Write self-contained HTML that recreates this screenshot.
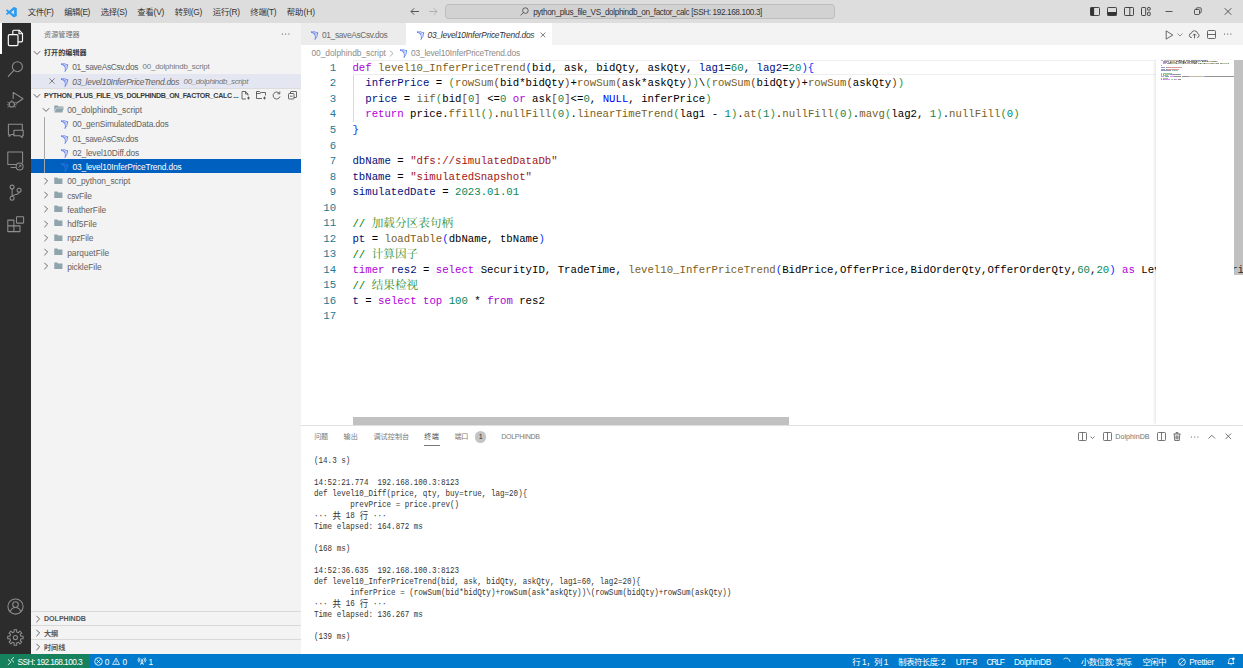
<!DOCTYPE html>
<html lang="zh-CN">
<head>
<meta charset="utf-8">
<title>03_level10InferPriceTrend.dos</title>
<style>
*{box-sizing:border-box;margin:0;padding:0}
html,body{width:1243px;height:668px;overflow:hidden;background:#fff}
body{position:relative;font-family:"Liberation Sans","Noto Sans CJK SC",sans-serif;font-size:8.4px;color:#616161}
div,span{white-space:pre}
.a{position:absolute}
#titlebar{position:absolute;left:0;top:0;width:1243px;height:22.7px;background:#dddddd}
#activity{position:absolute;left:0;top:22.7px;width:31px;height:631.3px;background:#2c2c2c}
#sidebar{position:absolute;left:31px;top:22.7px;width:270px;height:631.3px;background:#f3f3f3}
#tabs{position:absolute;left:301px;top:22.7px;width:942px;height:22.7px;background:#f3f3f3}
#editor{position:absolute;left:301px;top:45.4px;width:942px;height:381px;background:#fff}
#panel{position:absolute;left:301px;top:425.5px;width:942px;height:229px;background:#fff;border-top:1px solid #e0e0e0}
#status{position:absolute;left:0;top:653.8px;width:1243px;height:14.2px;background:#007acc;color:#fff}
.menu{position:absolute;top:0;height:22.7px;line-height:23.5px;color:#333;font-size:8.4px}
.row{position:absolute;left:0;width:301px;background-clip:content-box;padding-left:31px;height:14.24px;line-height:14.24px;font-size:8.4px;color:#616161}
.row span.a{top:0.9px}
.hd{font-weight:bold;font-size:7.1px;color:#3b3b3b}
.code{position:absolute;left:353px;height:15.54px;line-height:15.54px;font-family:"Liberation Mono","Noto Serif CJK SC",monospace;font-size:10.7px;color:#000;letter-spacing:0px}
.ln{position:absolute;left:301px;width:35.2px;text-align:right;height:15.54px;line-height:15.54px;font-family:"Liberation Mono",monospace;font-size:10.7px;color:#237893}
.k{color:#af00db}.f{color:#795e26}.v{color:#001080}.n{color:#098658}.s{color:#a31515}.c{color:#008000}.b1{color:#0431fa}.b2{color:#319331}.b3{color:#7b3814}.nu{color:#0000ff}
.term{position:absolute;left:314px;height:11px;line-height:11px;font-family:"Liberation Mono","Noto Sans CJK SC",monospace;font-size:8.7px;color:#333;transform-origin:0 50%;transform:scaleX(0.8701)}
.tc{display:inline-block;width:10.44px;text-align:center;font-size:9.6px;line-height:11px;vertical-align:top}
.st{position:absolute;top:0;height:14.2px;line-height:16.4px;font-size:8.2px;color:#fff}
.pt{position:absolute;top:0;height:22.7px;line-height:22.7px;font-size:7.1px;color:#7a7a7a}
svg{position:absolute;overflow:visible}
#mm i{position:absolute;height:1.1px;opacity:0.42}
</style>
</head>
<body>
<div id="titlebar">
<svg style="left:6.3px;top:6.5px" width="10.8" height="10.4" viewBox="0 0 100 100" preserveAspectRatio="none"><path d="M96.5 10.8L75.9.9C73.5-.3 70.7.2 68.8 2.100L29.4 38 12.2 25c-1.600-1.200-3.800-1.100-5.300.2L1.400 30.200c-1.900 1.700-1.900 4.600 0 6.300L16.300 50 1.400 63.500c-1.900 1.700-1.900 4.600 0 6.300l5.500 5c1.500 1.300 3.700 1.400 5.300.2l17.200-13 39.400 35.900c1.900 1.900 4.700 2.400 7.100 1.200l20.600-9.900c2.100-1 3.500-3.200 3.500-5.600V16.400c0-2.400-1.400-4.600-3.500-5.600zM75 27.300L45.100 50 75 72.700z" fill="#2a9bf1" fill-rule="evenodd"/></svg>
<div class="menu" style="left:27.7px;top:1.2px;font-size:8.4px;letter-spacing:-0.351px">文件(F)</div>
<div class="menu" style="left:64.2px;top:1.2px;font-size:8.4px;letter-spacing:-0.444px">编辑(E)</div>
<div class="menu" style="left:100.7px;top:1.2px;font-size:8.4px;letter-spacing:-0.324px">选择(S)</div>
<div class="menu" style="left:137.2px;top:1.2px;font-size:8.4px;letter-spacing:-0.184px">查看(V)</div>
<div class="menu" style="left:174.7px;top:1.2px;font-size:8.4px;letter-spacing:-0.309px">转到(G)</div>
<div class="menu" style="left:212.8px;top:1.2px;font-size:8.4px;letter-spacing:-0.258px">运行(R)</div>
<div class="menu" style="left:250.3px;top:1.2px;font-size:8.4px;letter-spacing:-0.271px">终端(T)</div>
<div class="menu" style="left:286.8px;top:1.2px;font-size:8.4px;letter-spacing:-0.058px">帮助(H)</div>
<svg style="left:410px;top:7px" width="10" height="9" viewBox="0 0 10 9"><path d="M9 4.5H1.2M4.2 1.3L1 4.5l3.2 3.2" fill="none" stroke="#444" stroke-width="0.9"/></svg>
<svg style="left:428px;top:7px" width="10" height="9" viewBox="0 0 10 9"><path d="M1 4.5h7.8M5.8 1.3L9 4.5 5.8 7.7" fill="none" stroke="#aaa" stroke-width="0.9"/></svg>
<div class="a" style="left:444.8px;top:4px;width:389.8px;height:15.3px;background:#d2d2d2;border:1px solid #bdbdbd;border-radius:3.5px"></div>
<svg style="left:520px;top:7px" width="9" height="9" viewBox="0 0 9 9"><circle cx="5.4" cy="3.6" r="2.8" fill="none" stroke="#444" stroke-width="0.8"/><path d="M3.4 5.6L0.6 8.4" stroke="#444" stroke-width="0.8"/></svg>
<div class="menu" style="left:533.2px;top:0.7px;font-size:8.2px;letter-spacing:-0.374px">python_plus_file_VS_dolphindb_on_factor_calc [SSH: 192.168.100.3]</div>
<svg style="left:1090.0px;top:7px" width="10" height="9" viewBox="0 0 10 9"><rect x="0.5" y="0.5" width="9" height="8" rx="0.8" fill="none" stroke="#333" stroke-width="0.9"/><rect x="0.5" y="0.5" width="3.6" height="8" fill="#333"/></svg>
<svg style="left:1107.0px;top:7px" width="10" height="9" viewBox="0 0 10 9"><rect x="0.5" y="0.5" width="9" height="8" rx="0.8" fill="none" stroke="#333" stroke-width="0.9"/><rect x="0.5" y="5" width="9" height="3.5" fill="#333"/></svg>
<svg style="left:1124.0px;top:7px" width="10" height="9" viewBox="0 0 10 9"><rect x="0.5" y="0.5" width="9" height="8" rx="0.8" fill="none" stroke="#333" stroke-width="0.9"/><path d="M5.8 0.5v8" stroke="#333" stroke-width="0.9"/></svg>
<svg style="left:1141.0px;top:7px" width="10" height="9" viewBox="0 0 10 9"><rect x="0.5" y="0.5" width="4.2" height="8" rx="0.8" fill="none" stroke="#333" stroke-width="0.9"/><rect x="6.6" y="0.5" width="2.6" height="2.6" rx="0.6" fill="none" stroke="#333" stroke-width="0.9"/><rect x="6.6" y="5.2" width="2.6" height="3.3" rx="0.6" fill="none" stroke="#333" stroke-width="0.9"/></svg>
<svg style="left:1165px;top:7px" width="8" height="9" viewBox="0 0 8 9"><path d="M0.5 4.5h7" stroke="#333" stroke-width="0.8"/></svg>
<svg style="left:1194px;top:7px" width="8" height="9" viewBox="0 0 8 9"><rect x="0.5" y="2.5" width="5" height="5" rx="0.8" fill="none" stroke="#333" stroke-width="0.8"/><path d="M2.2 2.5V1.6a0.8 0.8 0 0 1 .8-.8h3.4a0.8 0.8 0 0 1 .8.8V5a0.8 0.8 0 0 1-.8.8H5.6" fill="none" stroke="#333" stroke-width="0.8"/></svg>
<svg style="left:1224px;top:7px" width="8" height="9" viewBox="0 0 8 9"><path d="M0.7 1.2l6.6 6.6M7.3 1.2L0.7 7.8" stroke="#333" stroke-width="0.8"/></svg>
</div>
<div id="activity">
<div class="a" style="left:0;top:0;width:1.5px;height:31px;background:#fff"></div>
<svg style="left:0;top:0.30px" width="31" height="31" viewBox="0 0 31 31" fill="none" stroke="#ffffff" stroke-width="1.15" stroke-linejoin="round" stroke-linecap="round"><path d="M12.8 11.4V8.2a1 1 0 0 1 1-1h5.3l3.400 3.400v7.200a1 1 0 0 1-1 1h-3.300"/><path d="M19 7.300v3.400h3.400"/><rect x="8.300" y="11.600" width="9.700" height="11" rx="1.300"/></svg>
<svg style="left:0;top:31.37px" width="31" height="31" viewBox="0 0 31 31" fill="none" stroke="#8e8e8e" stroke-width="1.05" stroke-linejoin="round" stroke-linecap="round"><circle cx="17.400" cy="12.700" r="5"/><path d="M13.800 16.400L8.300 22.400"/></svg>
<svg style="left:0;top:62.44px" width="31" height="31" viewBox="0 0 31 31" fill="none" stroke="#8e8e8e" stroke-width="1.05" stroke-linejoin="round" stroke-linecap="round"><path d="M13.200 13.500V7.400L23 13.700l-6.600 4.500"/><circle cx="11.800" cy="19.400" r="2.600"/><path d="M11.800 16.800v-1.300M9.300 18.300l-1.600-.9M9.200 19.800H7.400M9.500 21l-1.600 1.200M14.300 18.300l1.600-.9M14.400 19.800h1.800M14.100 21l1.600 1.200" stroke-width="0.800"/></svg>
<svg style="left:0;top:93.51px" width="31" height="31" viewBox="0 0 31 31" fill="none" stroke="#8e8e8e" stroke-width="1.05" stroke-linejoin="round" stroke-linecap="round"><path d="M13.900 18.400h-2.600l-2.200 2v-2H8.400V8.200h13.900v6"/><path d="M13.900 14.300h9.300v5.500h-1v1.800l-2-1.800h-6.300z"/></svg>
<svg style="left:0;top:124.58px" width="31" height="31" viewBox="0 0 31 31" fill="none" stroke="#8e8e8e" stroke-width="1.05" stroke-linejoin="round" stroke-linecap="round"><path d="M15.500 17.400H7.800V5h14.800v10.600"/><path d="M11 20.500h4.500"/><circle cx="19.600" cy="19.400" r="3.500"/><path d="M18.400 20.600l2.400-2.400M20.800 18.200h-1.600M20.800 18.200v1.600" stroke-width="0.700"/></svg>
<svg style="left:0;top:155.65px" width="31" height="31" viewBox="0 0 31 31" fill="none" stroke="#8e8e8e" stroke-width="1.05" stroke-linejoin="round" stroke-linecap="round"><circle cx="12.100" cy="9.100" r="2"/><circle cx="12.100" cy="20.300" r="2"/><circle cx="19.100" cy="12.300" r="2"/><path d="M12.100 11.100v7.200M19.100 14.300c0 3.200-6.500 1.800-7 4"/></svg>
<svg style="left:0;top:186.72px" width="31" height="31" viewBox="0 0 31 31" fill="none" stroke="#8e8e8e" stroke-width="1.05" stroke-linejoin="round" stroke-linecap="round"><path d="M7.800 11.100h6.100v5.750h6.100v5.750H7.800zM7.800 16.850h6.100M13.900 16.850v5.750"/><rect x="16.500" y="7.800" width="7.100" height="6.300" rx="0.500"/></svg>
<svg style="left:0;top:568.45px" width="31" height="31" viewBox="0 0 31 31" fill="none" stroke="#8e8e8e" stroke-width="1.050"><circle cx="15.500" cy="15.500" r="7.600"/><circle cx="15.500" cy="13.600" r="2.800"/><path d="M10.200 20.900c.8-3 2.800-4.400 5.300-4.400s4.500 1.400 5.300 4.400"/></svg>
<svg style="left:0;top:599.5px" width="31" height="31" viewBox="0 0 31 31" fill="none" stroke="#8e8e8e" stroke-width="1.050" stroke-linejoin="round"><path d="M14.08 7.81 L16.72 7.81 L16.64 9.94 L18.45 10.69 L19.90 9.13 L21.77 11.00 L20.21 12.45 L20.96 14.25 L23.09 14.18 L23.09 16.82 L20.96 16.74 L20.21 18.55 L21.77 20.00 L19.90 21.87 L18.45 20.31 L16.65 21.06 L16.72 23.19 L14.08 23.19 L14.16 21.06 L12.35 20.31 L10.90 21.87 L9.03 20.00 L10.59 18.55 L9.84 16.75 L7.71 16.82 L7.71 14.18 L9.84 14.26 L10.59 12.45 L9.03 11.00 L10.90 9.13 L12.35 10.69 L14.15 9.94Z"/><circle cx="15.400" cy="15.500" r="2.100"/></svg>
</div>
<div id="sidebar"></div>
<div class="a" style="left:44.1px;top:22.7px;height:22.7px;line-height:24.2px;color:#6f6f6f;font-size:7.1px;letter-spacing:0.006px">资源管理器</div>
<svg style="left:281.4px;top:32.1px" width="10" height="4" viewBox="0 0 10 4"><circle cx="1.5" cy="2" r="0.62" fill="#444"/><circle cx="4.7" cy="2" r="0.62" fill="#444"/><circle cx="7.9" cy="2" r="0.62" fill="#444"/></svg>
<div class="row hd" style="top:45.30px"><svg style="left:33.4px;top:4.2px" width="8" height="8" viewBox="0 0 8 8"><path d="M0.800 2.200L4 5.400 7.200 2.200" fill="none" stroke="#555" stroke-width="0.9"/></svg><span class="a" style="left:44px;font-size:7.1px;letter-spacing:0.006px;font-weight:bold">打开的编辑器</span></div>
<div class="row" style="top:59.54px"><svg style="left:60.4px;top:2.8px" width="9" height="10" viewBox="0 0 9 10"><path d="M1.4 2Q4.3 0.7 7.6 3M7.6 3Q7.8 6.500 5.200 9.200M1.4 2Q4 3.400 5 5.200 5.900 7 5.200 9.200M3.500 2.700L6 4.400" fill="none" stroke="#5577f2" stroke-width="0.8" stroke-linejoin="round" stroke-linecap="round"/><circle cx="1.500" cy="2" r="0.5" fill="#5577f2"/><circle cx="7.600" cy="3" r="0.5" fill="#5577f2"/></svg><span class="a" style="left:72.3px;font-size:8.4px;letter-spacing:-0.330px">01_saveAsCsv.dos</span><span class="a" style="left:142.6px;color:#777;font-size:7.9px;letter-spacing:-0.197px">00_dolphindb_script</span></div>
<div class="row" style="top:73.78px;background-color:#e4e6f1"><svg style="left:48.7px;top:4.2px" width="6" height="6" viewBox="0 0 6 6"><path d="M0.4 0.4l5.2 5.2M5.6 0.4l-5.2 5.2" stroke="#555" stroke-width="0.7"/></svg><svg style="left:60.4px;top:2.8px" width="9" height="10" viewBox="0 0 9 10"><path d="M1.4 2Q4.3 0.7 7.6 3M7.6 3Q7.8 6.500 5.200 9.200M1.4 2Q4 3.400 5 5.200 5.900 7 5.200 9.200M3.500 2.700L6 4.400" fill="none" stroke="#5577f2" stroke-width="0.8" stroke-linejoin="round" stroke-linecap="round"/><circle cx="1.500" cy="2" r="0.5" fill="#5577f2"/><circle cx="7.600" cy="3" r="0.5" fill="#5577f2"/></svg><span class="a" style="left:72.3px;font-size:8.4px;letter-spacing:-0.223px;font-style:italic">03_level10InferPriceTrend.dos</span><span class="a" style="left:183.6px;color:#777;font-size:7.9px;letter-spacing:-0.328px;font-style:italic">00_dolphindb_script</span></div>
<div class="row hd" style="top:88.02px"><span class="a" style="left:31px;top:0;width:270px;height:1px;background:#dcdcdc"></span><svg style="left:33.4px;top:4.2px" width="8" height="8" viewBox="0 0 8 8"><path d="M0.800 2.200L4 5.400 7.200 2.200" fill="none" stroke="#555" stroke-width="0.9"/></svg><span class="a" style="left:44px;font-size:7.1px;letter-spacing:-0.335px;font-weight:bold">PYTHON_PLUS_FILE_VS_DOLPHINDB_ON_FACTOR_CALC ...</span><svg style="left:241.3px;top:3.4px" width="10" height="9" viewBox="0 0 10 9" fill="none" stroke="#444" stroke-width="0.8"><path d="M5 8H1V0.5h3.5L7 3v1.5M4.5 0.5V3H7"/><path d="M7.5 5.5v3M6 7h3"/></svg><svg style="left:256px;top:3.4px" width="11" height="9" viewBox="0 0 11 9" fill="none" stroke="#444" stroke-width="0.8"><path d="M6 7.5H0.5V0.5h3l1 1h5v3M0.5 2.5h4"/><path d="M8.5 5.5v3M7 7h3"/></svg><svg style="left:272px;top:3.4px" width="9" height="9" viewBox="0 0 9 9" fill="none" stroke="#444" stroke-width="0.8"><path d="M7.5 2.5A3.5 3.5 0 1 0 8 5.5M7.8 0.5v2.300H5.5"/></svg><svg style="left:287.5px;top:3.4px" width="9" height="9" viewBox="0 0 9 9" fill="none" stroke="#444" stroke-width="0.8"><rect x="0.5" y="2.5" width="5.5" height="5.5" rx="0.8"/><path d="M2.5 2.5V1a.5.5 0 0 1 .5-.5h5a.5.5 0 0 1 .5.5v5a.5.5 0 0 1-.5.5H6M2 5.2h2.500"/></svg></div>
<div class="row" style="top:102.26px"><svg style="left:41.7px;top:3.4px" width="8" height="8" viewBox="0 0 8 8"><path d="M0.800 2.200L4 5.400 7.200 2.200" fill="none" stroke="#5a5a5a" stroke-width="0.9"/></svg><svg style="left:53.6px;top:3.2px" width="10" height="8" viewBox="0 0 10 8"><path d="M0.300 0.600h3.400l.900 1h4.800v1.200H2.200L0.300 7z" fill="#90a4ae"/><path d="M2.400 3.200h7.500L8.200 7.500H0.500z" fill="#90a4ae"/></svg><span class="a" style="left:67.2px;font-size:8.4px;letter-spacing:-0.009px">00_dolphindb_script</span></div>
<div class="row" style="top:116.50px"><svg style="left:60.4px;top:2.8px" width="9" height="10" viewBox="0 0 9 10"><path d="M1.4 2Q4.3 0.7 7.6 3M7.6 3Q7.8 6.500 5.200 9.200M1.4 2Q4 3.400 5 5.200 5.900 7 5.200 9.200M3.500 2.700L6 4.400" fill="none" stroke="#5577f2" stroke-width="0.8" stroke-linejoin="round" stroke-linecap="round"/><circle cx="1.500" cy="2" r="0.5" fill="#5577f2"/><circle cx="7.600" cy="3" r="0.5" fill="#5577f2"/></svg><span class="a" style="left:72.4px;font-size:8.4px;letter-spacing:-0.105px">00_genSimulatedData.dos</span></div>
<div class="row" style="top:130.74px"><svg style="left:60.4px;top:2.8px" width="9" height="10" viewBox="0 0 9 10"><path d="M1.4 2Q4.3 0.7 7.6 3M7.6 3Q7.8 6.500 5.200 9.200M1.4 2Q4 3.400 5 5.200 5.900 7 5.200 9.200M3.500 2.700L6 4.400" fill="none" stroke="#5577f2" stroke-width="0.8" stroke-linejoin="round" stroke-linecap="round"/><circle cx="1.500" cy="2" r="0.5" fill="#5577f2"/><circle cx="7.600" cy="3" r="0.5" fill="#5577f2"/></svg><span class="a" style="left:72.4px;font-size:8.4px;letter-spacing:-0.342px">01_saveAsCsv.dos</span></div>
<div class="row" style="top:144.98px"><svg style="left:60.4px;top:2.8px" width="9" height="10" viewBox="0 0 9 10"><path d="M1.4 2Q4.3 0.7 7.6 3M7.6 3Q7.8 6.500 5.200 9.200M1.4 2Q4 3.400 5 5.200 5.900 7 5.200 9.200M3.500 2.700L6 4.400" fill="none" stroke="#5577f2" stroke-width="0.8" stroke-linejoin="round" stroke-linecap="round"/><circle cx="1.500" cy="2" r="0.5" fill="#5577f2"/><circle cx="7.600" cy="3" r="0.5" fill="#5577f2"/></svg><span class="a" style="left:72.4px;font-size:8.4px;letter-spacing:-0.115px">02_level10Diff.dos</span></div>
<div class="row" style="top:159.22px;background-color:#0060c0;color:#fff"><svg style="left:60.4px;top:2.8px" width="9" height="10" viewBox="0 0 9 10"><path d="M1.4 2Q4.3 0.7 7.6 3M7.6 3Q7.8 6.500 5.200 9.200M1.4 2Q4 3.400 5 5.200 5.900 7 5.200 9.200M3.500 2.700L6 4.400" fill="none" stroke="#3474e2" stroke-width="0.8" stroke-linejoin="round" stroke-linecap="round"/><circle cx="1.500" cy="2" r="0.5" fill="#3474e2"/><circle cx="7.600" cy="3" r="0.5" fill="#3474e2"/></svg><span class="a" style="left:72.4px;font-size:8.4px;letter-spacing:-0.160px">03_level10InferPriceTrend.dos</span></div>
<div class="row" style="top:173.46px"><svg style="left:41.7px;top:3.4px" width="8" height="8" viewBox="0 0 8 8"><path d="M2.400 0.800L5.600 4 2.400 7.200" fill="none" stroke="#5a5a5a" stroke-width="0.9"/></svg><svg style="left:53.6px;top:3.2px" width="8.7" height="7.600" viewBox="0 0 10 8" preserveAspectRatio="none"><path d="M0.300 0.500h3.500l1 1.100h4.900v5.900H0.300z" fill="#90a4ae"/></svg><span class="a" style="left:67.2px;font-size:8.4px;letter-spacing:-0.050px">00_python_script</span></div>
<div class="row" style="top:187.70px"><svg style="left:41.7px;top:3.4px" width="8" height="8" viewBox="0 0 8 8"><path d="M2.400 0.800L5.600 4 2.400 7.200" fill="none" stroke="#5a5a5a" stroke-width="0.9"/></svg><svg style="left:53.6px;top:3.2px" width="8.7" height="7.600" viewBox="0 0 10 8" preserveAspectRatio="none"><path d="M0.300 0.500h3.500l1 1.100h4.900v5.900H0.300z" fill="#90a4ae"/></svg><span class="a" style="left:67.2px;font-size:8.4px;letter-spacing:-0.238px">csvFile</span></div>
<div class="row" style="top:201.94px"><svg style="left:41.7px;top:3.4px" width="8" height="8" viewBox="0 0 8 8"><path d="M2.400 0.800L5.600 4 2.400 7.200" fill="none" stroke="#5a5a5a" stroke-width="0.9"/></svg><svg style="left:53.6px;top:3.2px" width="8.7" height="7.600" viewBox="0 0 10 8" preserveAspectRatio="none"><path d="M0.300 0.500h3.500l1 1.100h4.900v5.900H0.300z" fill="#90a4ae"/></svg><span class="a" style="left:67.2px;font-size:8.4px;letter-spacing:-0.062px">featherFile</span></div>
<div class="row" style="top:216.18px"><svg style="left:41.7px;top:3.4px" width="8" height="8" viewBox="0 0 8 8"><path d="M2.400 0.800L5.600 4 2.400 7.200" fill="none" stroke="#5a5a5a" stroke-width="0.9"/></svg><svg style="left:53.6px;top:3.2px" width="8.7" height="7.600" viewBox="0 0 10 8" preserveAspectRatio="none"><path d="M0.300 0.500h3.500l1 1.100h4.900v5.900H0.300z" fill="#90a4ae"/></svg><span class="a" style="left:67.2px;font-size:8.4px;letter-spacing:-0.025px">hdf5File</span></div>
<div class="row" style="top:230.42px"><svg style="left:41.7px;top:3.4px" width="8" height="8" viewBox="0 0 8 8"><path d="M2.400 0.800L5.600 4 2.400 7.200" fill="none" stroke="#5a5a5a" stroke-width="0.9"/></svg><svg style="left:53.6px;top:3.2px" width="8.7" height="7.600" viewBox="0 0 10 8" preserveAspectRatio="none"><path d="M0.300 0.500h3.500l1 1.100h4.900v5.900H0.300z" fill="#90a4ae"/></svg><span class="a" style="left:67.2px;font-size:8.4px;letter-spacing:-0.114px">npzFile</span></div>
<div class="row" style="top:244.66px"><svg style="left:41.7px;top:3.4px" width="8" height="8" viewBox="0 0 8 8"><path d="M2.400 0.800L5.600 4 2.400 7.200" fill="none" stroke="#5a5a5a" stroke-width="0.9"/></svg><svg style="left:53.6px;top:3.2px" width="8.7" height="7.600" viewBox="0 0 10 8" preserveAspectRatio="none"><path d="M0.300 0.500h3.500l1 1.100h4.900v5.900H0.300z" fill="#90a4ae"/></svg><span class="a" style="left:67.2px;font-size:8.4px;letter-spacing:0.009px">parquetFile</span></div>
<div class="row" style="top:258.90px"><svg style="left:41.7px;top:3.4px" width="8" height="8" viewBox="0 0 8 8"><path d="M2.400 0.800L5.600 4 2.400 7.200" fill="none" stroke="#5a5a5a" stroke-width="0.9"/></svg><svg style="left:53.6px;top:3.2px" width="8.7" height="7.600" viewBox="0 0 10 8" preserveAspectRatio="none"><path d="M0.300 0.500h3.500l1 1.100h4.900v5.900H0.300z" fill="#90a4ae"/></svg><span class="a" style="left:67.2px;font-size:8.4px;letter-spacing:-0.052px">pickleFile</span></div>
<div class="a" style="left:44px;top:116.5px;width:1px;height:56.500px;background:#a6a6a6"></div>
<div class="row hd" style="top:610.80px;color:#555"><span class="a" style="left:31px;top:0;width:270px;height:1px;background:#d8d8d8"></span><svg style="left:33.8px;top:4.0px" width="8" height="8" viewBox="0 0 8 8"><path d="M2.400 0.800L5.600 4 2.400 7.200" fill="none" stroke="#555" stroke-width="0.9"/></svg><span class="a" style="left:44px;top:1.4px;font-size:7.1px;letter-spacing:-0.030px;font-weight:bold">DOLPHINDB</span></div>
<div class="row hd" style="top:625.20px;color:#555"><span class="a" style="left:31px;top:0;width:270px;height:1px;background:#d8d8d8"></span><svg style="left:33.8px;top:4.0px" width="8" height="8" viewBox="0 0 8 8"><path d="M2.400 0.800L5.600 4 2.400 7.200" fill="none" stroke="#555" stroke-width="0.9"/></svg><span class="a" style="left:44px;top:1.4px;font-size:7.1px;letter-spacing:-0.144px;font-weight:bold">大纲</span></div>
<div class="row hd" style="top:639.00px;color:#555"><span class="a" style="left:31px;top:0;width:270px;height:1px;background:#d8d8d8"></span><svg style="left:33.8px;top:4.0px" width="8" height="8" viewBox="0 0 8 8"><path d="M2.400 0.800L5.600 4 2.400 7.200" fill="none" stroke="#555" stroke-width="0.9"/></svg><span class="a" style="left:44px;top:1.8px;font-size:7.1px;letter-spacing:0.006px;font-weight:bold">时间线</span></div>
<div id="tabs"></div>
<div class="a" style="left:301px;top:22.7px;width:104.6px;height:22.7px;background:#ececec"></div>
<div class="a" style="left:405.6px;top:22.7px;width:146.4px;height:22.7px;background:#fff"></div>
<svg style="position:absolute;left:310.0px;top:29.6px" width="9" height="10" viewBox="0 0 9 10"><path d="M1.4 2Q4.3 0.7 7.6 3M7.6 3Q7.8 6.500 5.200 9.200M1.4 2Q4 3.400 5 5.200 5.900 7 5.200 9.200M3.500 2.700L6 4.400" fill="none" stroke="#5577f2" stroke-width="0.8" stroke-linejoin="round" stroke-linecap="round"/><circle cx="1.500" cy="2" r="0.5" fill="#5577f2"/><circle cx="7.600" cy="3" r="0.5" fill="#5577f2"/></svg><div class="a" style="left:322px;top:22.7px;height:22.7px;line-height:25.2px;color:#6a6a6a;font-size:8.4px;letter-spacing:-0.355px">01_saveAsCsv.dos</div>
<svg style="left:415.7px;top:29.6px" width="9" height="10" viewBox="0 0 9 10"><path d="M1.4 2Q4.3 0.7 7.6 3M7.6 3Q7.8 6.500 5.200 9.200M1.4 2Q4 3.400 5 5.200 5.900 7 5.200 9.200M3.500 2.700L6 4.400" fill="none" stroke="#5577f2" stroke-width="0.8" stroke-linejoin="round" stroke-linecap="round"/><circle cx="1.500" cy="2" r="0.5" fill="#5577f2"/><circle cx="7.600" cy="3" r="0.5" fill="#5577f2"/></svg><div class="a" style="left:427.6px;top:22.7px;height:22.7px;line-height:25.2px;color:#333;font-size:8.4px;letter-spacing:-0.233px;font-style:italic">03_level10InferPriceTrend.dos</div>
<svg style="left:540.3px;top:31.8px" width="6" height="6" viewBox="0 0 7 7"><path d="M0.6 0.6l5.6 5.6M6.2 0.6L0.6 6.2" stroke="#444" stroke-width="0.8"/></svg>
<svg style="left:1164.5px;top:29.5px" width="9" height="10" viewBox="0 0 9 10"><path d="M1.2 0.9v8.200l6.600-4.100z" fill="none" stroke="#444" stroke-width="0.8" stroke-linejoin="round"/></svg>
<svg style="left:1177px;top:32.5px" width="6" height="4" viewBox="0 0 6 4"><path d="M0.5 0.5l2.500 2.500 2.500-2.500" fill="none" stroke="#666" stroke-width="0.7"/></svg>
<svg style="left:1189px;top:29.5px" width="11" height="9" viewBox="0 0 11 9"><path d="M3 7.500H2.600a2.100 2.100 0 0 1-.3-4.200 3.200 3.200 0 0 1 6.300.3 2 2 0 0 1-.2 3.900H8" fill="none" stroke="#444" stroke-width="0.8"/><path d="M5.500 8.500V4M3.900 5.500l1.600-1.600 1.600 1.600" fill="none" stroke="#444" stroke-width="0.8"/></svg>
<svg style="left:1207px;top:29.500px" width="9" height="9" viewBox="0 0 9 9"><rect x="0.5" y="0.5" width="8" height="8" rx="1" fill="none" stroke="#444" stroke-width="0.8"/><path d="M0.5 4.500h8" stroke="#444" stroke-width="0.8"/></svg>
<svg style="left:1223.1px;top:32.3px" width="10" height="4" viewBox="0 0 10 4"><circle cx="1.5" cy="2" r="0.62" fill="#444"/><circle cx="4.7" cy="2" r="0.62" fill="#444"/><circle cx="7.9" cy="2" r="0.62" fill="#444"/></svg>
<div id="editor"></div>
<div class="a" style="left:311.5px;top:45.3px;height:14.3px;line-height:16.4px;color:#8b8b8b;font-size:8.4px;letter-spacing:-0.035px">00_dolphindb_script</div>
<svg style="left:389.3px;top:49.5px" width="5" height="7" viewBox="0 0 5 7"><path d="M0.8 0.5L4 3.500 0.8 6.500" fill="none" stroke="#8b8b8b" stroke-width="0.7"/></svg>
<svg style="left:398.7px;top:47.8px" width="9" height="10" viewBox="0 0 9 10"><path d="M1.4 2Q4.3 0.7 7.6 3M7.6 3Q7.8 6.500 5.200 9.200M1.4 2Q4 3.400 5 5.200 5.900 7 5.200 9.200M3.500 2.700L6 4.400" fill="none" stroke="#5577f2" stroke-width="0.8" stroke-linejoin="round" stroke-linecap="round"/><circle cx="1.500" cy="2" r="0.5" fill="#5577f2"/><circle cx="7.600" cy="3" r="0.5" fill="#5577f2"/></svg><div class="a" style="left:410.9px;top:45.3px;height:14.3px;line-height:16.4px;color:#8b8b8b;font-size:8.4px;letter-spacing:-0.160px">03_level10InferPriceTrend.dos</div>
<div class="a" style="left:352.6px;top:59.5px;width:803px;height:15.34px;border-top:1px solid #eeeeee;border-bottom:1px solid #eeeeee;border-left:1px solid #eeeeee"></div>
<div class="a" style="left:352.6px;top:74.8px;width:1px;height:46.9px;background:#dadada"></div>
<div class="ln" style="top:60.80px">1</div><div class="code" style="left:352.4px;top:60.80px"><span class="k">def</span> <span class="f">level10_InferPriceTrend</span><span class="b1">(</span>bid, ask, bidQty, askQty, <span class="v">lag1</span>=<span class="n">60</span>, <span class="v">lag2</span>=<span class="n">20</span><span class="b1">){</span></div>
<div class="ln" style="top:76.34px">2</div><div class="code" style="left:352.4px;top:76.34px">  <span class="v">inferPrice</span> = <span class="b2">(</span><span class="f">rowSum</span><span class="b3">(</span>bid*bidQty<span class="b3">)</span>+<span class="f">rowSum</span><span class="b3">(</span>ask*askQty<span class="b3">)</span><span class="b2">)</span>\<span class="b2">(</span><span class="f">rowSum</span><span class="b3">(</span>bidQty<span class="b3">)</span>+<span class="f">rowSum</span><span class="b3">(</span>askQty<span class="b3">)</span><span class="b2">)</span></div>
<div class="ln" style="top:91.88px">3</div><div class="code" style="left:352.4px;top:91.88px">  <span class="v">price</span> = <span class="f">iif</span><span class="b2">(</span>bid<span class="b3">[</span><span class="n">0</span><span class="b3">]</span> &lt;=<span class="n">0</span> <span class="k">or</span> ask<span class="b3">[</span><span class="n">0</span><span class="b3">]</span>&lt;=<span class="n">0</span>, <span class="nu">NULL</span>, inferPrice<span class="b2">)</span></div>
<div class="ln" style="top:107.42px">4</div><div class="code" style="left:352.4px;top:107.42px">  <span class="k">return</span> price.<span class="f">ffill</span><span class="b2">(</span><span class="b2">)</span>.<span class="f">nullFill</span><span class="b2">(</span><span class="n">0</span><span class="b2">)</span>.<span class="f">linearTimeTrend</span><span class="b2">(</span>lag1 - <span class="n">1</span><span class="b2">)</span>.<span class="f">at</span><span class="b2">(</span><span class="n">1</span><span class="b2">)</span>.<span class="f">nullFill</span><span class="b2">(</span><span class="n">0</span><span class="b2">)</span>.<span class="f">mavg</span><span class="b2">(</span>lag2, <span class="n">1</span><span class="b2">)</span>.<span class="f">nullFill</span><span class="b2">(</span><span class="n">0</span><span class="b2">)</span></div>
<div class="ln" style="top:122.96px">5</div><div class="code" style="left:352.4px;top:122.96px"><span class="b1">}</span></div>
<div class="ln" style="top:138.50px">6</div>
<div class="ln" style="top:154.04px">7</div><div class="code" style="left:352.4px;top:154.04px"><span class="v">dbName</span> = <span class="s">"dfs://simulatedDataDb"</span></div>
<div class="ln" style="top:169.58px">8</div><div class="code" style="left:352.4px;top:169.58px"><span class="v">tbName</span> = <span class="s">"simulatedSnapshot"</span></div>
<div class="ln" style="top:185.12px">9</div><div class="code" style="left:352.4px;top:185.12px"><span class="v">simulatedDate</span> = <span class="n">2023.01.01</span></div>
<div class="ln" style="top:200.66px">10</div>
<div class="ln" style="top:216.20px">11</div><div class="code" style="left:352.4px;top:216.20px"><span class="c">// <span style="font-size:11.65px;color:#2f8f2f">加载分区表句柄</span></span></div>
<div class="ln" style="top:231.74px">12</div><div class="code" style="left:352.4px;top:231.74px"><span class="v">pt</span> = <span class="f">loadTable</span><span class="b1">(</span>dbName, tbName<span class="b1">)</span></div>
<div class="ln" style="top:247.28px">13</div><div class="code" style="left:352.4px;top:247.28px"><span class="c">// <span style="font-size:11.65px;color:#2f8f2f">计算因子</span></span></div>
<div class="ln" style="top:262.82px">14</div><div class="code" style="left:352.4px;top:262.82px"><span class="k">timer</span> <span class="v">res2</span> = <span class="k">select</span> SecurityID, TradeTime, <span class="f">level10_InferPriceTrend</span><span class="b1">(</span>BidPrice,OfferPrice,BidOrderQty,OfferOrderQty,<span class="n">60</span>,<span class="n">20</span><span class="b1">)</span> <span class="k">as</span> Level10_InferPriceTrend <span class="k">from</span> pt <span class="k">context by</span> SecurityID</div>
<div class="ln" style="top:278.36px">15</div><div class="code" style="left:352.4px;top:278.36px"><span class="c">// <span style="font-size:11.65px;color:#2f8f2f">结果检视</span></span></div>
<div class="ln" style="top:293.90px">16</div><div class="code" style="left:352.4px;top:293.90px"><span class="v">t</span> = <span class="k">select</span> <span class="k">top</span> <span class="n">100</span> * <span class="k">from</span> res2</div>
<div class="ln" style="top:309.44px">17</div>
<div class="a" style="left:1156px;top:59.6px;width:78.2px;height:365.7px;background:#fff;box-shadow:-2px 0 3px -1px rgba(0,0,0,0.12)"></div>
<div class="a" style="left:1234.2px;top:59.6px;width:8.8px;height:215.5px;background:rgba(100,100,100,0.4)"></div>
<div class="a" style="left:353px;top:417.3px;width:436px;height:8px;background:rgba(100,100,100,0.4)"></div>
<div id="mm"><i style="left:1161.2px;top:59.5px;width:2.0px;background:#af00db"></i><i style="left:1163.8px;top:59.5px;width:15.0px;background:#795e26"></i><i style="left:1178.8px;top:59.5px;width:0.7px;background:#0431fa"></i><i style="left:1179.4px;top:59.5px;width:2.6px;background:#000000"></i><i style="left:1182.7px;top:59.5px;width:2.6px;background:#000000"></i><i style="left:1185.9px;top:59.5px;width:4.5px;background:#000000"></i><i style="left:1191.1px;top:59.5px;width:4.5px;background:#000000"></i><i style="left:1196.3px;top:59.5px;width:2.6px;background:#001080"></i><i style="left:1198.9px;top:59.5px;width:0.7px;background:#000000"></i><i style="left:1199.5px;top:59.5px;width:1.3px;background:#098658"></i><i style="left:1200.9px;top:59.5px;width:0.7px;background:#000000"></i><i style="left:1202.2px;top:59.5px;width:2.6px;background:#001080"></i><i style="left:1204.8px;top:59.5px;width:0.7px;background:#000000"></i><i style="left:1205.4px;top:59.5px;width:1.3px;background:#098658"></i><i style="left:1206.7px;top:59.5px;width:1.3px;background:#0431fa"></i><i style="left:1162.5px;top:60.8px;width:6.5px;background:#001080"></i><i style="left:1169.7px;top:60.8px;width:0.7px;background:#000000"></i><i style="left:1171.0px;top:60.8px;width:0.7px;background:#319331"></i><i style="left:1171.6px;top:60.8px;width:3.9px;background:#795e26"></i><i style="left:1175.5px;top:60.8px;width:0.7px;background:#7b3814"></i><i style="left:1176.2px;top:60.8px;width:6.5px;background:#000000"></i><i style="left:1182.7px;top:60.8px;width:0.7px;background:#7b3814"></i><i style="left:1183.3px;top:60.8px;width:0.7px;background:#000000"></i><i style="left:1184.0px;top:60.8px;width:3.9px;background:#795e26"></i><i style="left:1187.9px;top:60.8px;width:0.7px;background:#7b3814"></i><i style="left:1188.5px;top:60.8px;width:6.5px;background:#000000"></i><i style="left:1195.0px;top:60.8px;width:0.7px;background:#7b3814"></i><i style="left:1195.7px;top:60.8px;width:0.7px;background:#319331"></i><i style="left:1196.3px;top:60.8px;width:0.7px;background:#000000"></i><i style="left:1197.0px;top:60.8px;width:0.7px;background:#319331"></i><i style="left:1197.6px;top:60.8px;width:3.9px;background:#795e26"></i><i style="left:1201.5px;top:60.8px;width:0.7px;background:#7b3814"></i><i style="left:1202.2px;top:60.8px;width:3.9px;background:#000000"></i><i style="left:1206.0px;top:60.8px;width:0.7px;background:#7b3814"></i><i style="left:1206.7px;top:60.8px;width:0.7px;background:#000000"></i><i style="left:1207.4px;top:60.8px;width:3.9px;background:#795e26"></i><i style="left:1211.2px;top:60.8px;width:0.7px;background:#7b3814"></i><i style="left:1211.9px;top:60.8px;width:3.9px;background:#000000"></i><i style="left:1215.8px;top:60.8px;width:0.7px;background:#7b3814"></i><i style="left:1216.5px;top:60.8px;width:0.7px;background:#319331"></i><i style="left:1162.5px;top:62.1px;width:3.2px;background:#001080"></i><i style="left:1166.4px;top:62.1px;width:0.7px;background:#000000"></i><i style="left:1167.7px;top:62.1px;width:2.0px;background:#795e26"></i><i style="left:1169.7px;top:62.1px;width:0.7px;background:#319331"></i><i style="left:1170.3px;top:62.1px;width:2.0px;background:#000000"></i><i style="left:1172.2px;top:62.1px;width:0.7px;background:#7b3814"></i><i style="left:1172.9px;top:62.1px;width:0.7px;background:#098658"></i><i style="left:1173.5px;top:62.1px;width:0.7px;background:#7b3814"></i><i style="left:1174.9px;top:62.1px;width:1.3px;background:#000000"></i><i style="left:1176.2px;top:62.1px;width:0.7px;background:#098658"></i><i style="left:1177.5px;top:62.1px;width:1.3px;background:#af00db"></i><i style="left:1179.4px;top:62.1px;width:2.0px;background:#000000"></i><i style="left:1181.4px;top:62.1px;width:0.7px;background:#7b3814"></i><i style="left:1182.0px;top:62.1px;width:0.7px;background:#098658"></i><i style="left:1182.7px;top:62.1px;width:0.7px;background:#7b3814"></i><i style="left:1183.3px;top:62.1px;width:1.3px;background:#000000"></i><i style="left:1184.6px;top:62.1px;width:0.7px;background:#098658"></i><i style="left:1185.2px;top:62.1px;width:0.7px;background:#000000"></i><i style="left:1186.5px;top:62.1px;width:2.6px;background:#0000ff"></i><i style="left:1189.2px;top:62.1px;width:0.7px;background:#000000"></i><i style="left:1190.5px;top:62.1px;width:6.5px;background:#000000"></i><i style="left:1197.0px;top:62.1px;width:0.7px;background:#319331"></i><i style="left:1162.5px;top:63.4px;width:3.9px;background:#af00db"></i><i style="left:1167.0px;top:63.4px;width:3.9px;background:#000000"></i><i style="left:1171.0px;top:63.4px;width:3.2px;background:#795e26"></i><i style="left:1174.2px;top:63.4px;width:0.7px;background:#319331"></i><i style="left:1174.9px;top:63.4px;width:0.7px;background:#319331"></i><i style="left:1175.5px;top:63.4px;width:0.7px;background:#000000"></i><i style="left:1176.2px;top:63.4px;width:5.2px;background:#795e26"></i><i style="left:1181.4px;top:63.4px;width:0.7px;background:#319331"></i><i style="left:1182.0px;top:63.4px;width:0.7px;background:#098658"></i><i style="left:1182.7px;top:63.4px;width:0.7px;background:#319331"></i><i style="left:1183.3px;top:63.4px;width:0.7px;background:#000000"></i><i style="left:1184.0px;top:63.4px;width:9.8px;background:#795e26"></i><i style="left:1193.7px;top:63.4px;width:0.7px;background:#319331"></i><i style="left:1194.4px;top:63.4px;width:2.6px;background:#000000"></i><i style="left:1197.6px;top:63.4px;width:0.7px;background:#000000"></i><i style="left:1198.9px;top:63.4px;width:0.7px;background:#098658"></i><i style="left:1199.5px;top:63.4px;width:0.7px;background:#319331"></i><i style="left:1200.2px;top:63.4px;width:0.7px;background:#000000"></i><i style="left:1200.9px;top:63.4px;width:1.3px;background:#795e26"></i><i style="left:1202.2px;top:63.4px;width:0.7px;background:#319331"></i><i style="left:1202.8px;top:63.4px;width:0.7px;background:#098658"></i><i style="left:1203.5px;top:63.4px;width:0.7px;background:#319331"></i><i style="left:1204.1px;top:63.4px;width:0.7px;background:#000000"></i><i style="left:1204.8px;top:63.4px;width:5.2px;background:#795e26"></i><i style="left:1210.0px;top:63.4px;width:0.7px;background:#319331"></i><i style="left:1210.6px;top:63.4px;width:0.7px;background:#098658"></i><i style="left:1211.2px;top:63.4px;width:0.7px;background:#319331"></i><i style="left:1211.9px;top:63.4px;width:0.7px;background:#000000"></i><i style="left:1212.5px;top:63.4px;width:2.6px;background:#795e26"></i><i style="left:1215.2px;top:63.4px;width:0.7px;background:#319331"></i><i style="left:1215.8px;top:63.4px;width:3.2px;background:#000000"></i><i style="left:1219.7px;top:63.4px;width:0.7px;background:#098658"></i><i style="left:1220.4px;top:63.4px;width:0.7px;background:#319331"></i><i style="left:1221.0px;top:63.4px;width:0.7px;background:#000000"></i><i style="left:1221.7px;top:63.4px;width:5.2px;background:#795e26"></i><i style="left:1226.9px;top:63.4px;width:0.7px;background:#319331"></i><i style="left:1227.5px;top:63.4px;width:0.7px;background:#098658"></i><i style="left:1228.2px;top:63.4px;width:0.7px;background:#319331"></i><i style="left:1161.2px;top:64.7px;width:0.7px;background:#0431fa"></i><i style="left:1161.2px;top:67.3px;width:3.9px;background:#001080"></i><i style="left:1165.8px;top:67.3px;width:0.7px;background:#000000"></i><i style="left:1167.0px;top:67.3px;width:15.0px;background:#a31515"></i><i style="left:1161.2px;top:68.6px;width:3.9px;background:#001080"></i><i style="left:1165.8px;top:68.6px;width:0.7px;background:#000000"></i><i style="left:1167.0px;top:68.6px;width:12.3px;background:#a31515"></i><i style="left:1161.2px;top:69.9px;width:8.5px;background:#001080"></i><i style="left:1170.3px;top:69.9px;width:0.7px;background:#000000"></i><i style="left:1171.6px;top:69.9px;width:6.5px;background:#098658"></i><i style="left:1161.2px;top:72.5px;width:1.3px;background:#008000"></i><i style="left:1163.2px;top:72.5px;width:9.1px;background:#008000"></i><i style="left:1161.2px;top:73.8px;width:1.3px;background:#001080"></i><i style="left:1163.2px;top:73.8px;width:0.7px;background:#000000"></i><i style="left:1164.5px;top:73.8px;width:5.9px;background:#795e26"></i><i style="left:1170.3px;top:73.8px;width:0.7px;background:#0431fa"></i><i style="left:1171.0px;top:73.8px;width:4.5px;background:#000000"></i><i style="left:1176.2px;top:73.8px;width:3.9px;background:#000000"></i><i style="left:1180.0px;top:73.8px;width:0.7px;background:#0431fa"></i><i style="left:1161.2px;top:75.1px;width:1.3px;background:#008000"></i><i style="left:1163.2px;top:75.1px;width:5.2px;background:#008000"></i><i style="left:1161.2px;top:76.4px;width:3.2px;background:#af00db"></i><i style="left:1165.1px;top:76.4px;width:2.6px;background:#001080"></i><i style="left:1168.4px;top:76.4px;width:0.7px;background:#000000"></i><i style="left:1169.7px;top:76.4px;width:3.9px;background:#af00db"></i><i style="left:1174.2px;top:76.4px;width:7.2px;background:#000000"></i><i style="left:1182.0px;top:76.4px;width:6.5px;background:#000000"></i><i style="left:1189.2px;top:76.4px;width:15.0px;background:#795e26"></i><i style="left:1204.1px;top:76.4px;width:0.7px;background:#0431fa"></i><i style="left:1204.8px;top:76.4px;width:29.2px;background:#000000"></i><i style="left:1161.2px;top:77.7px;width:1.3px;background:#008000"></i><i style="left:1163.2px;top:77.7px;width:5.2px;background:#008000"></i><i style="left:1161.2px;top:79.0px;width:0.7px;background:#001080"></i><i style="left:1162.5px;top:79.0px;width:0.7px;background:#000000"></i><i style="left:1163.8px;top:79.0px;width:3.9px;background:#af00db"></i><i style="left:1168.4px;top:79.0px;width:2.0px;background:#af00db"></i><i style="left:1171.0px;top:79.0px;width:2.0px;background:#098658"></i><i style="left:1173.5px;top:79.0px;width:0.7px;background:#000000"></i><i style="left:1174.9px;top:79.0px;width:2.6px;background:#af00db"></i><i style="left:1178.1px;top:79.0px;width:2.6px;background:#000000"></i></div>
<div class="a" style="left:301px;top:425.3px;width:942px;height:1px;background:#e0e0e0"></div>
<div class="pt" style="left:314.3px;top:426.2px;color:#7a7a7a;font-size:7.1px;letter-spacing:-0.344px">问题</div>
<div class="pt" style="left:343.6px;top:426.2px;color:#7a7a7a;font-size:7.1px;letter-spacing:0.056px">输出</div>
<div class="pt" style="left:373.4px;top:426.2px;color:#7a7a7a;font-size:7.1px;letter-spacing:0.086px">调试控制台</div>
<div class="pt" style="left:424.3px;top:426.2px;color:#4a4a4a;font-size:7.1px;letter-spacing:0.256px">终端</div>
<div class="pt" style="left:454.4px;top:426.2px;color:#7a7a7a;font-size:7.1px;letter-spacing:-0.144px">端口</div>
<div class="pt" style="left:501.2px;top:426.2px;color:#7a7a7a;font-size:7.1px;letter-spacing:-0.310px">DOLPHINDB</div>
<div class="a" style="left:423.8px;top:444.5px;width:15.8px;height:1.2px;background:#777"></div>
<div class="a" style="left:474.9px;top:431.2px;width:11.6px;height:11.6px;border-radius:6px;background:#c4c4c4;color:#333;font-size:7.1px;line-height:12.6px;text-align:center">1</div>
<svg style="left:1077.8px;top:432.0px" width="9" height="9" viewBox="0 0 9 9" fill="none" stroke="#555" stroke-width="0.8"><rect x="0.5" y="0.5" width="8" height="8" rx="0.8"/><path d="M4.5 0.5v8"/></svg>
<svg style="left:1090.0px;top:435.5px" width="5" height="3" viewBox="0 0 5 3" fill="none" stroke="#555" stroke-width="0.8"><path d="M0.5 0.5l2 2 2-2"/></svg>
<svg style="left:1103.0px;top:432.0px" width="9" height="9" viewBox="0 0 9 9" fill="none" stroke="#555" stroke-width="0.8"><rect x="0.5" y="0.5" width="8" height="8" rx="0.8"/><path d="M4.5 0.5v8"/></svg>
<div class="pt" style="left:1115.3px;top:426.2px;color:#717171;font-size:7.1px;letter-spacing:0.042px">DolphinDB</div>
<svg style="left:1156.6px;top:432.0px" width="9" height="9" viewBox="0 0 9 9" fill="none" stroke="#555" stroke-width="0.8"><rect x="0.5" y="0.5" width="8" height="8" rx="0.8"/><path d="M4.5 0.5v8"/></svg>
<svg style="left:1173.4px;top:432.0px" width="8" height="9" viewBox="0 0 8 9" fill="none" stroke="#555" stroke-width="0.8"><path d="M0.5 2h7M3 2V0.6h2V2M1.2 2l.5 6.500h4.600l.5-6.500M3 3.500v3.800M4 3.500v3.800M5 3.500v3.800"/></svg>
<svg style="left:1189.8px;top:434.5px" width="10" height="4" viewBox="0 0 10 4"><circle cx="1.5" cy="2" r="0.62" fill="#555"/><circle cx="4.7" cy="2" r="0.62" fill="#555"/><circle cx="7.9" cy="2" r="0.62" fill="#555"/></svg>
<svg style="left:1207.6px;top:433.5px" width="8" height="6" viewBox="0 0 8 6" fill="none" stroke="#555" stroke-width="0.8"><path d="M0.5 4.500l3.300-3.300 3.300 3.300"/></svg>
<svg style="left:1224.8px;top:433.3px" width="7" height="7" viewBox="0 0 7 7" fill="none" stroke="#555" stroke-width="0.8"><path d="M0.5 0.5l5.600 5.600M6.100 0.5L0.5 6.100"/></svg>
<div class="term" style="top:455.65px">(14.3 s)</div>
<div class="term" style="top:477.65px">14:52:21.774  192.168.100.3:8123</div>
<div class="term" style="top:488.65px">def level10_Diff(price, qty, buy=true, lag=20){</div>
<div class="term" style="top:499.65px">        prevPrice = price.prev()</div>
<div class="term" style="top:510.65px">··· <span class="tc">共</span> 18 <span class="tc">行</span> ···</div>
<div class="term" style="top:521.65px">Time elapsed: 164.872 ms</div>
<div class="term" style="top:543.65px">(168 ms)</div>
<div class="term" style="top:565.65px">14:52:36.635  192.168.100.3:8123</div>
<div class="term" style="top:576.65px">def level10_InferPriceTrend(bid, ask, bidQty, askQty, lag1=60, lag2=20){</div>
<div class="term" style="top:587.65px">        inferPrice = (rowSum(bid*bidQty)+rowSum(ask*askQty))\(rowSum(bidQty)+rowSum(askQty))</div>
<div class="term" style="top:598.65px">··· <span class="tc">共</span> 16 <span class="tc">行</span> ···</div>
<div class="term" style="top:609.65px">Time elapsed: 136.267 ms</div>
<div class="term" style="top:631.65px">(139 ms)</div>
<div id="status">
<div class="a" style="left:0;top:0;width:88.5px;height:14.2px;background:#16825d"></div>
<svg style="left:0;top:0" width="20" height="14" viewBox="0 0 20 14" fill="none" stroke="#fff" stroke-width="0.85"><path d="M8 5.400l2.800 2.700L8 10.900M14 3.200l-2.700 2.600L14 8.300"/></svg>
<div class="st" style="left:17.6px;font-size:8.4px;letter-spacing:-0.613px">SSH: 192.168.100.3</div>
<svg style="left:93.6px;top:3px" width="9" height="9" viewBox="0 0 9 9" fill="none" stroke="#fff" stroke-width="0.8"><circle cx="4.500" cy="4.500" r="3.800"/><path d="M2.500 2.500l4 4M6.500 2.500l-4 4"/></svg>
<div class="st" style="left:104.7px;font-size:8.4px;letter-spacing:-0.372px">0</div>
<svg style="left:112.2px;top:3px" width="8.2" height="8.600" viewBox="0 0 9 9" fill="none" stroke="#fff" stroke-width="0.8"><path d="M4.500 0.900L8.300 8H0.700z" stroke-linejoin="round"/><path d="M4.500 3.300v2.500M4.500 6.400v0.900"/></svg>
<div class="st" style="left:122.6px;font-size:8.4px;letter-spacing:-0.372px">0</div>
<svg style="left:138.4px;top:3px" width="8" height="8.600" viewBox="0 0 9 9" fill="none" stroke="#fff" stroke-width="0.8"><circle cx="4.500" cy="3" r="0.900"/><path d="M4.500 4L2.800 8.500M4.500 4l1.700 4.500M3.300 7h2.400M2.500 1a2.800 2.800 0 0 0 0 4M6.500 1a2.800 2.800 0 0 1 0 4M1.200 0.200a4.200 4.200 0 0 0 0 5.600M7.800 0.200a4.200 4.200 0 0 1 0 5.600"/></svg>
<div class="st" style="left:148.6px;font-size:8.4px;letter-spacing:-1.072px">1</div>
<div class="st" style="left:852.3px;font-size:8.4px;letter-spacing:-0.487px">行 1，列 1</div>
<div class="st" style="left:898.3px;font-size:8.4px;letter-spacing:-0.536px">制表符长度: 2</div>
<div class="st" style="left:955.8px;font-size:8.4px;letter-spacing:-0.607px">UTF-8</div>
<div class="st" style="left:986.4px;font-size:8.4px;letter-spacing:-1.144px">CRLF</div>
<div class="st" style="left:1013.9px;font-size:8.4px;letter-spacing:-0.327px">DolphinDB</div>
<svg style="left:1061.6px;top:3px" width="9" height="9" viewBox="0 0 9 9" fill="none" stroke="#fff" stroke-width="0.8"><path d="M1.500 2.200A3.800 3.800 0 0 1 8 4.800"/></svg>
<div class="st" style="left:1081.0px;font-size:8.4px;letter-spacing:-0.576px">小数位数: 实际</div>
<div class="st" style="left:1142.5px;font-size:8.4px;letter-spacing:-0.542px">空闲中</div>
<svg style="left:1178px;top:3.9px" width="8" height="8" viewBox="0 0 8 8" fill="none" stroke="#fff" stroke-width="0.8"><circle cx="4" cy="4" r="3.400"/><path d="M1.700 6.300l4.600-4.600"/></svg>
<div class="st" style="left:1189.2px;font-size:8.4px;letter-spacing:-0.275px">Prettier</div>
<svg style="left:1226.6px;top:3px" width="8" height="9" viewBox="0 0 8 9" fill="none" stroke="#fff" stroke-width="0.8"><path d="M1 6.500h6L6.200 5V3.500a2.200 2.200 0 0 0-4.400 0V5zM3.200 7.500a0.900 0.900 0 0 0 1.600 0"/><circle cx="6.300" cy="1.700" r="1.300" fill="#fff" stroke="none"/></svg>
</div>
</body>
</html>
